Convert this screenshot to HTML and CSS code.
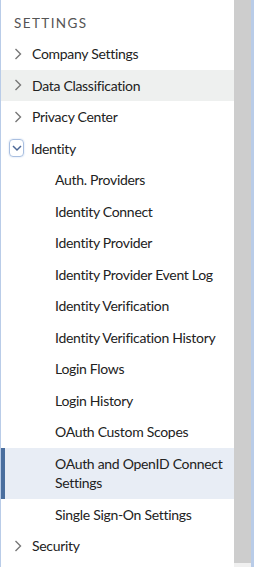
FILE: index.html
```html
<!DOCTYPE html>
<html>
<head>
    <title>Settings</title>
    <link rel="stylesheet" href="styles.css">
</head>
<body>
    <div class="panel">
        <nav class="nav">
            <div class="nav-title">SETTINGS</div>
            <ul class="tree">
                <li class="node"><span class="caret"><svg width="8" height="12" viewBox="0 0 8 12"><path d="M1.5 1 L6.5 6 L1.5 11" /></svg></span>Company Settings</li>
                <li class="node hover"><span class="caret"><svg width="8" height="12" viewBox="0 0 8 12"><path d="M1.5 1 L6.5 6 L1.5 11" /></svg></span>Data Classification</li>
                <li class="node"><span class="caret"><svg width="8" height="12" viewBox="0 0 8 12"><path d="M1.5 1 L6.5 6 L1.5 11" /></svg></span>Privacy Center</li>
                <li class="node open"><span class="caret focus"><svg width="10" height="8" viewBox="0 0 10 8"><path d="M1 2 L5 6 L9 2" /></svg></span>Identity</li>
                <li class="leaf">Auth. Providers</li>
                <li class="leaf">Identity Connect</li>
                <li class="leaf">Identity Provider</li>
                <li class="leaf">Identity Provider Event Log</li>
                <li class="leaf">Identity Verification</li>
                <li class="leaf">Identity Verification History</li>
                <li class="leaf">Login Flows</li>
                <li class="leaf">Login History</li>
                <li class="leaf">OAuth Custom Scopes</li>
                <li class="leaf selected">OAuth and OpenID Connect Settings</li>
                <li class="leaf">Single Sign-On Settings</li>
                <li class="node"><span class="caret"><svg width="8" height="12" viewBox="0 0 8 12"><path d="M1.5 1 L6.5 6 L1.5 11" /></svg></span>Security</li>
            </ul>
        </nav>
        <div class="scrollbar">
            <div class="thumb"></div>
            <div class="track-end"></div>
        </div>
    </div>
</body>
</html>
```

FILE: styles.css
```css
body { margin: 0; font-family: Lato, "Open Sans", sans-serif; color: #222; background: #fff; }
.panel { display: flex; height: 567px; border-left: 1px solid #b9cce8; border-right: 3px solid #b9cce8; overflow: hidden; }
.nav { width: 233px; flex: none; }
.nav-title { padding: 14px 0 0 13px; height: 24px; font-size: 13.5px; letter-spacing: 1.4px; color: #555; line-height: 18px; }
.tree { list-style: none; margin: 0; padding: 0; font-size: 14px; letter-spacing: -0.3px; }
.tree li { line-height: 19.5px; padding: 6px 4px 6px 0; }
.node { display: flex; align-items: center; }
.caret { width: 31px; flex: none; display: flex; align-items: center; justify-content: flex-start; padding-left: 13px; box-sizing: border-box; }
.caret svg { display: block; fill: none; stroke: #777; stroke-width: 1.4; }
.caret.focus { width: 15px; height: 18px; margin: 0 7px 0 8px; padding: 0; justify-content: center; border: 1px solid #a9bfe0; border-radius: 4px; box-shadow: 0 0 2px #c5d6ef; }
.caret.focus svg { stroke: #4d6896; stroke-width: 1.5; }
.hover { background: #eef0ef; }
.leaf { padding-left: 54px !important; }
.selected { background: #e8edf5; box-shadow: inset 4px 0 0 #4a6e9e; }
.scrollbar { width: 17px; flex: none; display: flex; flex-direction: column; }
.thumb { flex: 1; background: #cdcdcd; }
.track-end { height: 4px; background: #f0f0f0; }
```
